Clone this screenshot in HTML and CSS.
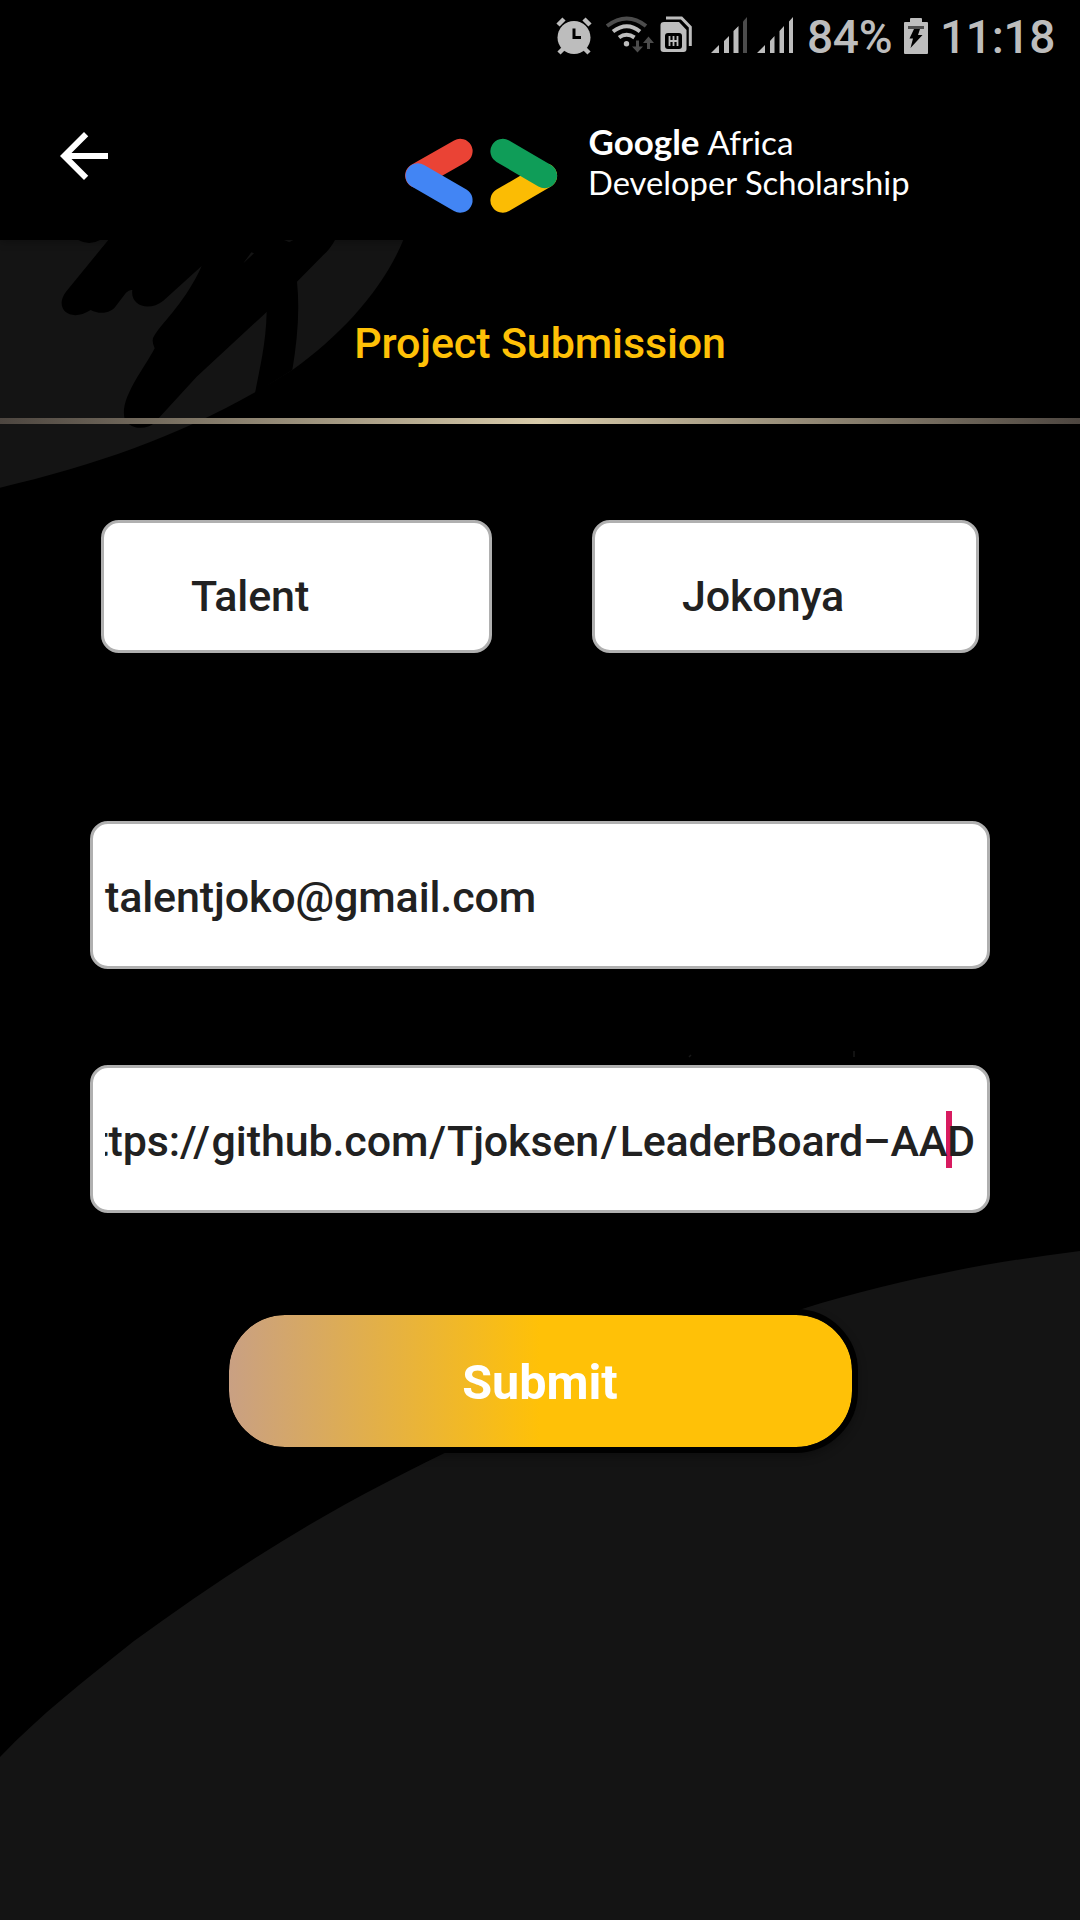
FILE: index.html
```html
<!DOCTYPE html>
<html lang="en">
<head>
<meta charset="utf-8">
<title>Project Submission</title>
<link rel="stylesheet" href="styles.css">
</head>
<body>
<div class="screen">
  <svg class="backdrop" viewBox="0 0 1080 1920" aria-hidden="true">
    <g transform="translate(0 100) scale(.33333)">
      <path class="shade" d="M0 420H1210C1150 565 1030 700 877 810C600 985 330 1085 0 1163Z"/>
      <path d="M235 420Q268 438 300 420H325L198 575C160 625 210 670 272 630C300 645 335 640 350 615L378 578Q388 568 397 570C390 620 450 635 490 602L605 498C560 600 490 665 464 705Q452 720 464 745C430 810 355 900 375 960C395 990 440 990 464 968L480 950L590 830L800 636C798 730 780 800 765 880L877 810C892 720 900 630 891 545L970 465Q990 448 1005 420Z"/>
      <path class="shade" d="M730 490L754 457L762 460ZM852 420L880 420L868 427Z"/>
    </g>
    <path class="shade" d="M0 1757C40 1715 85 1680 134 1641C200 1593 270 1546 344 1505C480 1430 640 1362 802 1309C895 1280 990 1262 1080 1251V1920H0Z"/>
    <path class="speck" d="M854 1051v6M689 1057l2-2"/>
  </svg>

  <div class="status">
    <svg class="status-icons" viewBox="550 0 250 72" aria-hidden="true">
      <g class="on">
        <circle cx="574" cy="37.500" r="16.500"/>
        <path class="line" d="M558 25l6-6M584 19l6 6M563 49l-4 4M585 49l4 4"/>
      </g>
      <path class="cut" d="M574 28.500V37.500H581"/>
      <path class="arc dim" d="M607 26Q627 11 646 26"/>
      <path class="arc" d="M613 31.500Q627 21 640 31.500M619 37.500Q626.500 32 634.500 37.500"/>
      <circle class="on" cx="626.500" cy="43.700" r="2.700"/>
      <path class="dimfill" d="M636 40.500h3v6h4l-5.500 6-5.500-6h4ZM647 49h3v-6h4l-5.500-6.500-5.500 6.500h4Z"/>
      <path class="on" d="M664 22h15l7.500 8v19q0 3-3 3h-20q-3 0-3-3V25q0-3 3.500-3Z"/>
      <path class="simback" d="M666 18H681.500L690.300 27V46"/>
      <rect x="665" y="33" width="17" height="16" rx="3"/>
      <path class="simmark" d="M669.500 36v10M673.500 36v10M677.500 36v10M669 41h9"/>
      <g class="on">
        <path d="M711 53l8-8v8ZM724 41l5-5v17h-5ZM733.500 31l5-5v27h-5Z"/>
        <path class="dimfill" d="M743 21.500l4-4.500v36h-4Z"/>
        <path d="M757 53l8-8v8ZM770 41l4.500-5v17H770ZM779.500 31l4.500-5v27h-4.500ZM789 21.500l4-4.500v36h-4Z"/>
      </g>
    </svg>
    <span class="percent">84%</span>
    <svg class="battery" viewBox="0 0 24 36" aria-hidden="true">
      <path class="on" d="M6 4V1q0-1 1-1h10q1 0 1 1v3h5q1 0 1 1v30q0 1-1 1H1q-1 0-1-1V5q0-1 1-1Z"/>
      <path class="dimfill" d="M4 8h16v3H4Z"/>
      <path d="M10 11h6l-2 6h4.500L6.500 30l2.500-9.500H5.500Z"/>
    </svg>
    <span class="clock">11:18</span>
  </div>

  <header class="appbar">
    <svg class="back" viewBox="0 0 24 24" aria-label="Back"><path d="M20 11H7.830l5.590-5.590L12 4l-8 8 8 8 1.410-1.410L7.830 13H20v-2z"/></svg>
    <svg class="brand" viewBox="400 120 520 100">
      <g class="mark">
        <path class="red" d="M417.500 175.600L460.200 151.200"/>
        <path class="blue" d="M417.900 175.800L460.200 200.300"/>
        <path class="yellow" d="M502.800 200.300L544.700 175.800"/>
        <path class="green" d="M502.800 151.200L544.700 175.800"/>
      </g>
      <text class="name bold" x="588.500" y="155" textLength="111" lengthAdjust="spacingAndGlyphs">Google</text>
      <text class="name" x="707.500" y="155" textLength="86" lengthAdjust="spacingAndGlyphs">Africa</text>
      <text class="name" x="588" y="195" textLength="321.500" lengthAdjust="spacingAndGlyphs">Developer Scholarship</text>
    </svg>
  </header>

  <main>
    <h1 class="title">Project Submission</h1>
    <div class="rule"></div>
    <form class="form">
      <div class="names">
        <div class="field first"><span class="value">Talent</span></div>
        <div class="field last"><span class="value">Jokonya</span></div>
      </div>
      <div class="field wide"><span class="value">talentjoko@gmail.com</span></div>
      <div class="field wide link"><div class="clip"><i class="caret"></i><span class="value url">https:<span class="scheme">//</span>github.com<span class="slash">/</span>Tjoksen<span class="slash open">/</span><span class="repo">LeaderBoard–AAD</span></span></div></div>
      <button class="submit" type="button">Submit</button>
    </form>
  </main>
</div>
</body>
</html>
```
FILE: styles.css
```css
* { box-sizing: border-box; }
body { margin: 0; background: #000; font-family: Roboto, sans-serif; }
.screen { position: relative; width: 1080px; height: 1920px; overflow: hidden; background: #000; }
.backdrop { position: absolute; inset: 0; width: 1080px; height: 1920px; }
.shade { fill: #141414; }
.speck { stroke: #181818; stroke-width: 1.500; }

.status { position: relative; display: flex; height: 72px; padding-left: 550px; background: #000; color: #bdbdbd; font-size: 46px; line-height: 75px; white-space: nowrap; }
.status-icons { flex: none; width: 250px; height: 72px; }
.on { fill: #bdbdbd; }
.line { stroke: #bdbdbd; stroke-width: 4.500; }
.cut { fill: none; stroke: #000; stroke-width: 3; }
.arc { fill: none; stroke: #bdbdbd; stroke-width: 4; }
.arc.dim { stroke: #4c4c4c; }
.dimfill { fill: #4c4c4c; }
.simback { fill: none; stroke: #bdbdbd; stroke-width: 3; }
.simmark { stroke: #bdbdbd; stroke-width: 1.800; }
.percent { width: 97px; margin-left: 7px; font-weight: 500; letter-spacing: -.3px; }
.battery { flex: none; width: 24px; height: 36px; margin-top: 18px; }
.clock { margin-left: 12px; font-weight: 500; letter-spacing: -.3px; }

.appbar { position: relative; display: flex; height: 168px; padding: 48px 0 0 48px; background: #000; box-shadow: 0 2px 8px rgba(0, 0, 0, .3); }
.back { width: 72px; height: 72px; fill: #fff; }
.brand { width: 520px; height: 100px; margin-left: 280px; }
.mark { fill: none; stroke-width: 24.800; stroke-linecap: round; }
.red { stroke: #ea4335; }
.blue { stroke: #4285f4; }
.yellow { stroke: #fbbc04; }
.green { stroke: #0f9d58; }
.name { font-family: Lato, sans-serif; font-size: 33.500px; fill: #fff; }
.bold { font-weight: 700; }

main { position: relative; }
.title { margin: 0; height: 178px; padding-top: 73px; color: #ffc107; font-size: 43px; font-weight: 500; line-height: 60px; letter-spacing: -.12px; text-align: center; }
.rule { height: 6px; background: linear-gradient(90deg, #4d4640, #d8cbaa 50%, #4d4640); }
.form { display: flex; flex-direction: column; padding: 96px 90px 0; }
.names { display: flex; justify-content: space-between; padding: 0 11px; margin-bottom: 168px; }
.field { display: flex; height: 148px; align-items: center; border: 3px solid #b0b0b0; border-radius: 18px; background: #fff; color: #212121; font-size: 43px; font-weight: 500; line-height: 60px; letter-spacing: -.12px; white-space: nowrap; }
.names .field { height: 133px; padding: 18px 0 0 87px; }
.first { width: 391px; }
.last { width: 387px; }
.wide { margin-bottom: 96px; padding: 4px 12px 0; }
.clip { position: relative; display: flex; justify-content: flex-end; width: 100%; overflow: hidden; }
.caret { position: absolute; top: 0; right: 23px; width: 6px; height: 58px; margin-top: -1px; background: #d81b60; }
.url { position: relative; }
.scheme { letter-spacing: 1.500px; }
.slash { margin-left: 1px; letter-spacing: 1px; }
.open { margin-left: 1.500px; letter-spacing: 2.200px; }
.repo { letter-spacing: -.2px; }
.submit { align-self: center; width: 635px; height: 144px; margin: 0; padding: 3px 0 0; border: 6px solid #000; border-radius: 62px; background: linear-gradient(90deg, #c9a083, #ffc107 50%) padding-box; box-shadow: 0 4px 10px rgba(0, 0, 0, .3); color: #fff; font: 700 48.500px/129px Roboto, sans-serif; }
```
